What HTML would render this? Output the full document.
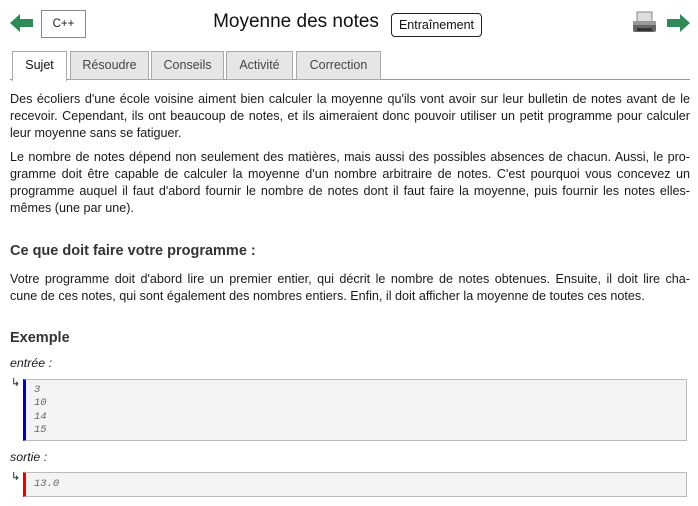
<!DOCTYPE html>
<html><head><meta charset="utf-8"><style>
body{margin:0;width:698px;height:506px;background:#fff;font-family:"Liberation Sans",sans-serif;color:#1a1a1a;position:relative;overflow:hidden}
.a{position:absolute}
.l{position:absolute;left:10px;width:680px;font-size:12.6px;line-height:17px;text-align:justify;text-align-last:justify;white-space:nowrap;height:17px}
.l.e{text-align-last:left}
.tab{position:absolute;top:51px;border:1px solid #aaa;background:#e6e6e6;font-size:12.5px;text-align:center;line-height:27px;color:#444;box-sizing:border-box;height:29px}
.box{position:absolute;left:23px;width:664px;background:#f4f4f4;border:1px solid #bbb;box-sizing:border-box;font-family:"Liberation Mono",monospace;font-style:italic;font-size:10.5px;color:#666;line-height:13.3px;padding-left:8px}
</style></head><body>
<svg class="a" style="left:10px;top:14px" width="24" height="18" viewBox="0 0 24 18"><path d="M0 9L10 0V5H23V13H10V18Z" fill="#2e8b57"/></svg>
<div class="a" style="left:41px;top:10px;width:45px;height:28px;border:1px solid #888;box-sizing:border-box;font-size:11.5px;text-align:center;line-height:26px">C++</div>
<div class="a" style="left:186px;top:9px;width:220px;text-align:center;font-size:19px;line-height:26px;color:#111">Moyenne des notes</div>
<div class="a" style="left:391px;top:13px;width:91px;height:24px;border:1px solid #222;border-radius:4px;box-sizing:border-box;font-size:12.5px;text-align:center;line-height:22px;color:#111">Entraînement</div>
<svg class="a" style="left:632px;top:11px" width="25" height="24" viewBox="0 0 25 24"><rect x="5" y="1" width="15" height="10" fill="#ddd" stroke="#888"/><rect x="1" y="10" width="23" height="11" rx="2" fill="#666"/><rect x="1" y="10" width="23" height="4" fill="#999"/><rect x="5" y="17" width="15" height="3" fill="#333"/></svg>
<svg class="a" style="left:667px;top:14px" width="23" height="18" viewBox="0 0 23 18"><path d="M23 9L13 0V5H0V13H13V18Z" fill="#2e8b57"/></svg>
<div class="a" style="left:10px;top:79px;width:680px;height:1px;background:#999"></div>
<div class="tab" style="left:12px;width:55px;background:#fff;border-bottom:none;color:#111;height:30px">Sujet</div>
<div class="tab" style="left:70px;width:79px">Résoudre</div>
<div class="tab" style="left:151px;width:73px">Conseils</div>
<div class="tab" style="left:226px;width:67px">Activité</div>
<div class="tab" style="left:296px;width:85px">Correction</div>

<div class="l" style="top:91px">Des écoliers d'une école voisine aiment bien calculer la moyenne qu'ils vont avoir sur leur bulletin de notes avant de le</div>
<div class="l" style="top:108px">recevoir. Cependant, ils ont beaucoup de notes, et ils aimeraient donc pouvoir utiliser un petit programme pour calculer</div>
<div class="l e" style="top:125px">leur moyenne sans se fatiguer.</div>
<div class="l" style="top:149px">Le nombre de notes dépend non seulement des matières, mais aussi des possibles absences de chacun. Aussi, le pro-</div>
<div class="l" style="top:166px">gramme doit être capable de calculer la moyenne d'un nombre arbitraire de notes. C'est pourquoi vous concevez un</div>
<div class="l" style="top:183px">programme auquel il faut d'abord fournir le nombre de notes dont il faut faire la moyenne, puis fournir les notes elles-</div>
<div class="l e" style="top:200px">mêmes (une par une).</div>
<div class="a" style="left:10px;top:241px;font-size:14.5px;font-weight:bold;color:#333;line-height:20px">Ce que doit faire votre programme :</div>
<div class="l" style="top:271px">Votre programme doit d'abord lire un premier entier, qui décrit le nombre de notes obtenues. Ensuite, il doit lire cha-</div>
<div class="l e" style="top:288px">cune de ces notes, qui sont également des nombres entiers. Enfin, il doit afficher la moyenne de toutes ces notes.</div>
<div class="a" style="left:10px;top:328px;font-size:14.5px;font-weight:bold;color:#333;line-height:20px">Exemple</div>
<div class="a" style="left:10px;top:355px;font-size:12.4px;font-style:italic;line-height:17px">entrée :</div>
<div class="a" style="left:11px;top:376px;font-size:11px">↳</div>
<div class="box" style="top:379px;height:62px;border-left:3px solid #00c;padding-top:4px">3<br>10<br>14<br>15</div>
<div class="a" style="left:10px;top:449px;font-size:12.4px;font-style:italic;line-height:17px">sortie :</div>
<div class="a" style="left:11px;top:470px;font-size:11px">↳</div>
<div class="box" style="top:472px;height:25px;border-left:3px solid #e00;line-height:23px">13.0</div>
</body></html>
